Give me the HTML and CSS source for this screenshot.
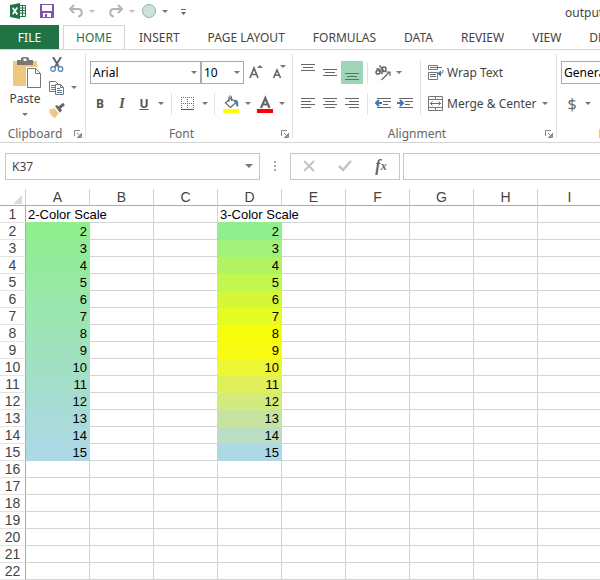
FILE: index.html
```html
<!DOCTYPE html>
<html lang="en">
<head>
<meta charset="utf-8">
<title>output - Excel</title>
<link rel="stylesheet" href="styles.css">
</head>
<body>
<header class="titlebar">
  <div class="quick">
    <svg class="logo" width="16" height="16" viewBox="0 0 16 16"><path fill="#fff" stroke="#217346" d="M9.500 2.500h6v11h-6z"/><path stroke="#217346" d="M10 5h5M10 7.500h5M10 10h5M12.500 3v10"/><path fill="#217346" d="M0 2l10-2v16L0 14z"/><path stroke="#fff" stroke-width="1.700" d="M2.700 4.800l4.600 6.600M7.300 4.600l-4.600 6.600"/></svg>
    <button class="qbtn" aria-label="Save"><svg width="14" height="14" viewBox="0 0 14 14"><path fill="#8451a5" d="M0 0h14v14H0z"/><path fill="#fff" d="M2 1h10v6H2zM3 9h8v4H3z"/><path fill="#8451a5" d="M5 10h2v3H5z"/></svg></button>
    <button class="qbtn undo" aria-label="Undo"><svg width="16" height="14" viewBox="0 0 16 14"><path fill="none" stroke="#b3b3b3" stroke-width="2" d="M6 1L2 5l4 4M2 5h8c5 0 5 7 0 7.500"/></svg></button>
    <button class="drop pale" aria-label="Undo list"></button>
    <button class="qbtn redo" aria-label="Redo"><svg width="16" height="14" viewBox="0 0 16 14"><path fill="none" stroke="#b3b3b3" stroke-width="2" d="M10 1l4 4-4 4M14 5H6c-5 0-5 7 0 7.500"/></svg></button>
    <button class="drop pale" aria-label="Redo list"></button>
    <button class="qbtn touch" aria-label="Touch mode"><svg width="16" height="16" viewBox="0 0 16 16"><circle cx="8" cy="8" r="6.500" fill="#d0e0da" stroke="#84b9a0"/></svg></button>
    <button class="drop" aria-label="Touch mode list"></button>
    <button class="qbtn custom" aria-label="Customize toolbar"><svg width="7" height="7" viewBox="0 0 7 7"><path fill="#666" d="M1 0h5v1H1zM1 3h5L3.500 6z"/></svg></button>
  </div>
  <span class="doc">output</span>
</header>
<nav class="tabs">
  <a class="file" href="#file">FILE</a>
  <a class="active" href="#home">HOME</a>
  <a href="#insert">INSERT</a>
  <a href="#layout">PAGE LAYOUT</a>
  <a href="#formulas">FORMULAS</a>
  <a href="#data">DATA</a>
  <a href="#review">REVIEW</a>
  <a href="#view">VIEW</a>
  <a href="#developer">DEVELOPER</a>
</nav>
<section class="ribbon">
  <div class="group clipboard">
    <div class="body">
      <button class="paste">
        <svg width="29" height="32" viewBox="0 0 29 32"><path fill="#edc87e" d="M0 4h24v25H0z"/><path fill="#777" d="M4 3h4V1l2-1h4l2 1v2h4v5H4z"/><path fill="#fff" d="M10.500 1.500h3V4h-3zM13 10h10l6 6v16H13z"/><path fill="none" stroke="#777" d="M14.500 11.500h8l5 5v14h-13zM22.500 11.500v5h5"/></svg>
        <span>Paste</span>
        <i class="tri"></i>
      </button>
      <div class="clips">
        <button aria-label="Cut"><svg width="16" height="16" viewBox="0 0 16 16"><path stroke="#666" stroke-width="2" d="M4 0l6 10M12 0L6 10"/><g fill="#fff" stroke="#4a7ead" stroke-width="1.200"><circle cx="4" cy="12" r="2.300"/><circle cx="11.500" cy="12" r="2.300"/></g></svg></button>
        <button class="with-tri" aria-label="Copy"><svg width="16" height="16" viewBox="0 0 16 16"><path fill="#fff" stroke="#777" d="M.5 1.500h6l3 3v7h-9z"/><path stroke="#4a7ead" d="M2 5.500h4M2 7.500h4M2 9.500h4"/><path fill="#fff" stroke="#777" d="M6.500 4.500h5l3 3v7h-8zM11.500 4.500v3h3"/><path stroke="#4a7ead" d="M8 8.500h3M8 10.500h5M8 12.500h5"/></svg><i class="tri"></i></button>
        <button aria-label="Format Painter"><svg width="16" height="16" viewBox="0 0 16 16"><path fill="#edc87e" d="M0 8l5-2 5 5-4 5c-2 0-5-4-6-8z"/><path fill="#666" d="M6 4l2-1 5 5-2 3z"/><path stroke="#666" stroke-width="3" d="M10 6l5-4"/><path stroke="#fff" d="M5 5l6 6.500"/></svg></button>
      </div>
    </div>
    <div class="foot"><span>Clipboard</span><button class="launch" aria-label="Clipboard options"><svg width="8" height="8" viewBox="0 0 8 8"><path fill="none" stroke="#888" d="M.5 6V.5H6M3 3l3 3M7.500 3v4.500H3M6.500 4v2.500H4"/></svg></button></div>
  </div>

  <div class="group font">
    <div class="rows">
      <div class="row fields">
        <label class="pick name"><select aria-label="Font"><option>Arial</option></select></label>
        <label class="pick size"><select aria-label="Font size"><option>10</option></select></label>
        <button class="w24" aria-label="Increase font size"><svg width="14" height="16" viewBox="0 0 14 16"><path fill="none" stroke="#666" stroke-width="1.700" d="M1 13L5 3l4 10M2.500 9.500h5"/><path fill="#4a7ead" d="M8 3h6l-3-3z"/></svg></button>
        <button aria-label="Decrease font size"><svg width="14" height="16" viewBox="0 0 14 16"><path fill="none" stroke="#666" stroke-width="1.600" d="M1.500 13L5 5l3.500 8M3 10.300h4"/><path fill="#4a7ead" d="M8 0h6l-3 3z"/></svg></button>
      </div>
      <div class="row styles">
        <button class="bold">B</button><button class="italic">I</button><button class="under">U</button><button class="arrow first" aria-label="Underline styles"><i class="tri"></i></button>
        <hr>
        <button class="w24" aria-label="Borders"><svg width="14" height="14" viewBox="0 0 14 14"><path fill="none" stroke="#666" stroke-dasharray="1 1" d="M0 .5h13M0 6.500h13M.5 0v13M6.500 0v13M12.500 0v13"/><path stroke="#555" d="M0 12.500h13"/></svg></button><button class="arrow" aria-label="Border styles"><i class="tri"></i></button>
        <hr>
        <button class="w24" aria-label="Fill color"><svg width="16" height="18" viewBox="0 0 16 18"><path fill="#fff" stroke="#666" stroke-width="1.200" d="M2.500 8l5-5 5.500 4.500-5.500 5z"/><path fill="none" stroke="#666" d="M6 7V2c0-1.500 2.500-1.500 2.500 0v4"/><path fill="#4a7ead" d="M11 5c4-1 5 3 4 7-3-1-1-4-4-7z"/><path fill="#ff0" d="M0 14h16v4H0z"/></svg></button><button class="arrow" aria-label="Fill colors"><i class="tri"></i></button>
        <button class="w24" aria-label="Font color"><svg width="16" height="18" viewBox="0 0 16 18"><path fill="none" stroke="#666" stroke-width="2.200" d="M4 13L8.300 3l4.200 10M5.500 9.500H11"/><path fill="#f00" d="M0 14h16v4H0z"/></svg></button><button class="arrow" aria-label="Font colors"><i class="tri"></i></button>
      </div>
    </div>
    <div class="foot"><span>Font</span><button class="launch" aria-label="Font options"><svg width="8" height="8" viewBox="0 0 8 8"><path fill="none" stroke="#888" d="M.5 6V.5H6M3 3l3 3M7.500 3v4.500H3M6.500 4v2.500H4"/></svg></button></div>
  </div>

  <div class="group align">
    <div class="body">
      <div class="rows">
        <div class="row">
          <button aria-label="Top align"><svg width="14" height="18" viewBox="0 0 14 18"><path stroke="#666" d="M0 .5h14M2 3.500h10M0 6.500h14"/></svg></button>
          <button aria-label="Middle align"><svg width="14" height="14" viewBox="0 0 14 14"><path stroke="#666" d="M0 3.500h14M2 6.500h10M0 9.500h14"/></svg></button>
          <button class="on" aria-label="Bottom align"><svg width="14" height="14" viewBox="0 0 14 14"><path stroke="#56745f" d="M0 7.500h14M2 10.500h10M0 13.500h14"/></svg></button>
          <hr>
          <button aria-label="Orientation"><svg width="16" height="16" viewBox="0 0 16 16"><g fill="none" stroke="#666" stroke-width="1.500"><ellipse cx="3" cy="7.300" rx="2" ry="1.800"/><path d="M1.500 4.500c1-1.500 2.500-.8 3.200.2L7.500 9M4.500.5l5 6.500"/><ellipse cx="9" cy="4.200" rx="2" ry="2.300"/></g><path fill="none" stroke="#666" stroke-width="1.200" d="M6.500 15L14 7.500M11 7h4v4"/></svg></button><button class="arrow" aria-label="Orientation list"><i class="tri"></i></button>
        </div>
        <div class="row">
          <button aria-label="Align left"><svg width="14" height="11" viewBox="0 0 14 11"><path stroke="#666" d="M0 .5h14M0 3.500h10M0 6.500h14M0 9.500h10"/></svg></button>
          <button aria-label="Center"><svg width="14" height="11" viewBox="0 0 14 11"><path stroke="#666" d="M0 .5h14M2 3.500h10M0 6.500h14M2 9.500h10"/></svg></button>
          <button aria-label="Align right"><svg width="14" height="11" viewBox="0 0 14 11"><path stroke="#666" d="M0 .5h14M4 3.500h10M0 6.500h14M4 9.500h10"/></svg></button>
          <hr>
          <button aria-label="Decrease indent"><svg width="16" height="11" viewBox="0 0 16 11"><path stroke="#666" d="M2 .5h14M8 3.500h8M8 6.500h5M2 9.500h14"/><path stroke="#3b78b5" stroke-width="2" d="M1 5h6M4 2L1 5l3 3" fill="none"/></svg></button>
          <button aria-label="Increase indent"><svg width="16" height="11" viewBox="0 0 16 11"><path stroke="#666" d="M2 .5h14M8 3.500h8M8 6.500h5M2 9.500h14"/><path stroke="#3b78b5" stroke-width="2" d="M0 5h6M3 2l3 3-3 3" fill="none"/></svg></button>
        </div>
      </div>
      <hr class="tall">
      <div class="rows">
        <div class="row"><button class="wide"><svg width="16" height="16" viewBox="0 0 16 16"><path fill="none" stroke="#777" d="M.5 .5h9v4h-9zM.5 7.500h9v7h-9z"/><path stroke="#666" d="M2 9.500h6M2 11.500h6"/><path fill="none" stroke="#3b78b5" d="M2 2.500h12M15 5v1c0 2-1 2.500-4 2.500"/><path fill="#3b78b5" d="M9 8.500L13 5.500v6z"/></svg>Wrap Text</button></div>
        <div class="row"><button class="wide"><svg width="16" height="16" viewBox="0 0 16 16"><path fill="none" stroke="#777" d="M.5 .5h14v14H.5zM.5 3.500h14M.5 11.500h14M7.500 .5v3M7.500 11.500v3"/><path fill="none" stroke="#3b78b5" d="M2 7.500h11M4.500 5.500l-2 2 2 2M10.500 5.500l2 2-2 2"/></svg>Merge &amp; Center</button><button class="arrow merge" aria-label="Merge options"><i class="tri"></i></button></div>
      </div>
    </div>
    <div class="foot"><span>Alignment</span><button class="launch" aria-label="Alignment options"><svg width="8" height="8" viewBox="0 0 8 8"><path fill="none" stroke="#888" d="M.5 6V.5H6M3 3l3 3M7.500 3v4.500H3M6.500 4v2.500H4"/></svg></button></div>
  </div>

  <div class="group number">
    <div class="rows">
      <div class="row fields"><label class="pick format"><select aria-label="Number format"><option>General</option></select></label></div>
      <div class="row"><button class="money" aria-label="Currency">$</button><button class="arrow" aria-label="Currency list"><i class="tri"></i></button></div>
    </div>
    <div class="foot"><span>Number</span></div>
  </div>
</section>
<section class="formula">
  <label class="namebox"><input aria-label="Name box" value="K37"></label>
  <svg class="grip" width="3" height="11" viewBox="0 0 3 11"><path fill="#aaa" d="M0 0h2v2H0zM0 4h2v2H0zM0 8h2v2H0z"/></svg>
  <div class="entry">
    <button aria-label="Cancel"><svg width="12" height="12" viewBox="0 0 12 12"><path stroke="#c3c3c3" stroke-width="2" d="M1 1l10 10M11 1L1 11"/></svg></button>
    <button aria-label="Enter"><svg width="14" height="12" viewBox="0 0 14 12"><path fill="none" stroke="#c3c3c3" stroke-width="2.500" d="M1 6l4 4 8-9"/></svg></button>
    <button class="fx" aria-label="Insert function">f<sub>x</sub></button>
  </div>
  <input class="bar" aria-label="Formula bar">
</section>
<main class="sheet">
  <table>
    <thead><tr id="letters"><th class="corner"><svg width="9" height="9" viewBox="0 0 9 9"><path fill="#dcdcdc" d="M9 0v9H0z"/></svg></th></tr></thead>
    <tbody id="cells"></tbody>
  </table>
</main>
<script src="script.js"></script>
</body>
</html>
```
FILE: styles.css
```css
* { box-sizing: border-box; }

body {
  margin: 0;
  height: 100vh;
  overflow: hidden;
  display: flex;
  flex-direction: column;
  background: #fff;
  color: #444;
  font: 12px/16px "Noto Sans", "Open Sans", sans-serif;
}

button {
  display: flex;
  align-items: center;
  justify-content: center;
  flex: none;
  width: 22px;
  height: 23px;
  padding: 0;
  border: 0;
  background: none;
  color: inherit;
  font: inherit;
}

svg { display: block; flex: none; }

.tri,
.drop::before,
.pick::after,
.namebox::after {
  content: "";
  border: 3px solid transparent;
  border-top-color: #777;
  border-bottom: 0;
}

/* Title bar */
.titlebar {
  display: flex;
  justify-content: space-between;
  flex: none;
  height: 25px;
  overflow: hidden;
}
.quick { display: flex; align-items: center; height: 22px; padding-left: 10px; }
.logo { margin-right: 14px; }
.qbtn { width: 14px; margin-right: 14px; }
.qbtn.undo, .qbtn.redo, .qbtn.touch { width: 16px; margin-right: 3px; }
.drop { width: 10px; margin-right: 12px; }
.drop.pale::before { border-top-color: #bbb; }
.qbtn.redo { margin-left: -1px; }
.qbtn.touch { margin-left: -8px; }
.qbtn.custom { width: 8px; margin: 3px 0 0 -3px; }
.doc { flex: none; width: 35px; padding-top: 5px; white-space: nowrap; }

/* Tabs */
.tabs {
  display: flex;
  flex: none;
  height: 25px;
  overflow: hidden;
  border-bottom: 1px solid #d4d4d4;
  white-space: nowrap;
}
.tabs a {
  flex: none;
  height: 25px;
  padding: 0 14px;
  color: #444;
  line-height: 25px;
  text-decoration: none;
}
.tabs .file { width: 59px; margin-right: 4px; padding: 0; background: #217346; color: #fff; text-align: center; }
.tabs .active { width: 62px; padding: 0; border: 1px solid #d4d4d4; border-bottom: 0; background: #fff; color: #217346; line-height: 23px; text-align: center; }

/* Ribbon */
.ribbon {
  display: flex;
  flex: none;
  overflow: hidden;
  border-bottom: 1px solid #d4d4d4;
  white-space: nowrap;
}
.group {
  position: relative;
  display: flex;
  flex-direction: column;
  flex: none;
  padding-top: 7px;
}
.group::after {
  content: "";
  position: absolute;
  top: 4px;
  right: 0;
  bottom: 4px;
  border-right: 1px solid #e1e1e1;
}
.clipboard { width: 86px; }
.font { width: 207px; }
.align { width: 264px; }
.number { width: 130px; }
.body { display: flex; height: 62px; }
.row { display: flex; align-items: center; height: 31px; }
.foot { display: flex; height: 23px; align-items: flex-end; color: #666; }
.foot span { flex: 1; text-align: center; }
.launch { width: 16px; height: 16px; }

hr { flex: none; width: 1px; height: 22px; margin: 0 4px; border: 0; background: #e1e1e1; }
.tall { height: 55px; margin: 3px 7px 0 4px; }

.paste { flex-direction: column; justify-content: flex-start; width: 44px; height: 62px; margin-left: 3px; }
.paste span { margin: 2px 0 6px; }
.paste svg { margin-left: 4px; }
.clips { display: flex; flex-direction: column; margin-left: 2px; }
.clips button { width: 32px; justify-content: flex-start; }
.clips button:first-child { height: 15px; }
.clips .with-tri { height: 31px; gap: 6px; }
.clips button:last-child { height: 14px; }

.fields { padding-left: 4px; }
.styles { padding-left: 3px; }
.w24 { width: 24px; }
.arrow { width: 10px; }
.first { width: 12px; }
.wide { width: auto; gap: 3px; }
.merge { margin-left: 3px; }
.align .rows:first-child { padding-left: 4px; }
.on { background: #9fd5b7; }

.pick { position: relative; display: block; flex: none; }
.pick::after { position: absolute; top: 10px; right: 4px; pointer-events: none; }
.pick select {
  display: block;
  width: 100%;
  height: 23px;
  margin: 0;
  padding: 0 2px;
  border: 1px solid #ababab;
  border-radius: 0;
  appearance: none;
  background: #fff;
  color: #000;
  font: inherit;
}
.name { width: 111px; }
.size { width: 43px; }
.format { width: 110px; }

.bold { font-weight: 700; color: #555; }
.italic { font-family: "Liberation Serif", serif; font-size: 14px; font-style: italic; font-weight: 700; color: #555; }
.under { font-weight: 700; text-decoration: underline; color: #555; }
.money { margin-left: 4px; font-size: 16px; color: #666; }

/* Formula bar */
.formula { display: flex; align-items: center; flex: none; height: 46px; padding-left: 5px; }
.formula input { height: 27px; padding: 0 6px; border: 1px solid #c6c6c6; background: #fff; color: #444; font: inherit; }
.namebox { position: relative; flex: none; }
.namebox input { display: block; width: 255px; }
.namebox::after { position: absolute; top: 11px; right: 7px; border-width: 4px 4px 0; }
.grip { margin: 0 13px 0 14px; }
.entry { display: flex; align-items: center; justify-content: space-around; flex: none; width: 110px; height: 27px; border: 1px solid #c6c6c6; }
.fx { font: italic 700 16px/16px "Liberation Serif", serif; color: #666; }
.fx sub { font-size: 12px; line-height: 8px; }
.formula .bar { flex: 1; min-width: 0; margin-left: 3px; border-right: 0; }

/* Sheet */
.sheet { flex: 1; min-height: 0; overflow: hidden; font: 13px/15px "Liberation Sans", Arial, sans-serif; }
table { width: 0; table-layout: fixed; border-collapse: separate; border-spacing: 0; }
th, td {
  width: 64px;
  height: 17px;
  padding: 1px 2px 0;
  border-right: 1px solid #d4d4d4;
  border-bottom: 1px solid #d4d4d4;
  color: #000;
  white-space: nowrap;
}
th { padding: 0; color: #444; font-size: 14px; font-weight: 400; }
thead th { border-bottom-color: #ababab; }
.corner, tbody th { width: 26px; }
.corner svg { margin: 4px 0 0 13px; }
tbody th { border-right-color: #ababab; border-bottom-color: #e4e4e4; }
.num { text-align: right; }
td.fill { border-color: var(--fill); background: var(--fill); }
tr:nth-child(2) .fill { box-shadow: 0 -1px var(--fill); }
.fill.mid { box-shadow: -1px 0 var(--fill); }
tr:nth-child(2) .fill.mid { box-shadow: 0 -1px var(--fill), -1px 0 var(--fill); }
```
FILE: script.js
```js
const green = [144, 238, 144];
const yellow = [255, 255, 0];
const blue = [173, 216, 230];
const columns = "ABCDEFGHI";

function mix(a, b, t) {
  return "rgb(" + a.map((v, i) => Math.round(v + (b[i] - v) * t)).join(",") + ")";
}

function scaleColor(column, value) {
  const t = (value - 2) / 13;
  if (column === "A") return mix(green, blue, t);
  return t < 0.5 ? mix(green, yellow, t * 2) : mix(yellow, blue, t * 2 - 1);
}

for (const letter of columns) {
  const th = document.createElement("th");
  th.textContent = letter;
  document.getElementById("letters").append(th);
}

for (let row = 1; row <= 23; row++) {
  const tr = document.createElement("tr");
  const head = document.createElement("th");
  head.textContent = row;
  tr.append(head);
  for (let i = 0; i < columns.length; i++) {
    const column = columns[i];
    const td = document.createElement("td");
    const scaled = column === "A" || column === "D";
    if (row === 1 && scaled) {
      td.colSpan = 2;
      td.textContent = column === "A" ? "2-Color Scale" : "3-Color Scale";
      i++;
    } else if (row <= 15 && scaled) {
      td.className = column === "D" ? "num fill mid" : "num fill";
      td.style.setProperty("--fill", scaleColor(column, row));
      td.textContent = row;
    }
    tr.append(td);
  }
  document.getElementById("cells").append(tr);
}
```
